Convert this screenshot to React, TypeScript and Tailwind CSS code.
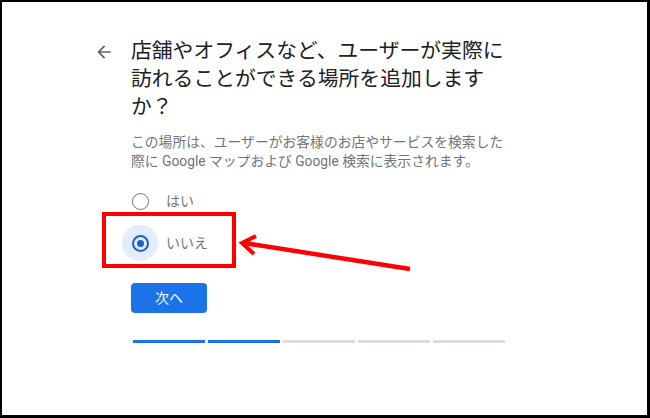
import React from "react";

const steps = [true, true, false, false, false];

const App = () => {
  return (
    <div className="relative w-[650px] h-[418px] bg-white border-t-2 border-l-2 border-r-[3px] border-b-[3px] border-black overflow-hidden font-['Roboto','Noto_Sans_CJK_JP',sans-serif]">
      <div className="flex items-start pl-[92px] pt-[35px]">
        {/* back button */}
        <svg viewBox="0 0 24 24" className="w-5 h-5 mt-[5px] mr-[17px] shrink-0 fill-[#5f6368]">
          <path d="M20 11H7.83l5.59-5.59L12 4l-8 8 8 8 1.41-1.41L7.83 13H20v-2z" />
        </svg>

        <div className="w-[376px] flex flex-col">
          <h1 className="text-[20.8px] leading-[28px] text-[#202124] font-normal">
            店舗やオフィスなど、ユーザーが実際に訪れることができる場所を追加しますか？
          </h1>
          <p className="mt-[12px] text-[13.8px] leading-[19px] text-[#70757a]">
            この場所は、ユーザーがお客様のお店やサービスを検索した際に Google マップおよび Google 検索に表示されます。
          </p>

          <div className="mt-[12px] flex flex-col gap-[6px]">
            <label className="flex items-center h-9 -ml-[9px]">
              <span className="w-9 h-9 rounded-full flex items-center justify-center">
                <span className="w-[17px] h-[17px] rounded-full border-[1.5px] border-[#6f7377]" />
              </span>
              <span className="ml-[8px] text-[14px] text-[#70757a]">はい</span>
            </label>
            <label className="flex items-center h-9 -ml-[9px]">
              <span className="w-9 h-9 rounded-full bg-[#e3edfc] flex items-center justify-center">
                <span className="w-[17px] h-[17px] rounded-full border-2 border-[#1a5fd0] flex items-center justify-center">
                  <span className="w-[7px] h-[7px] rounded-full bg-[#1a5fd0]" />
                </span>
              </span>
              <span className="ml-[8px] text-[14px] text-[#70757a]">いいえ</span>
            </label>
          </div>

          <button className="mt-[22px] w-[76px] h-[30px] rounded-[4px] bg-[#1a73e8] text-white text-[14px] leading-none">
            次へ
          </button>

          <div className="mt-[27px] ml-[2px] flex gap-[3px]">
            {steps.map((done, i) => (
              <div
                key={i}
                className={done ? "w-[72px] h-[3px] bg-[#1a73e8]" : "w-[72px] h-[3px] bg-[#dadce0]"}
              />
            ))}
          </div>
        </div>
      </div>

      {/* callout around the selected option */}
      <div className="absolute left-[100px] top-[210px] w-[134px] h-[56px] border-4 border-[#ff0000]" />
      <svg className="absolute left-0 top-0 w-[645px] h-[413px] pointer-events-none" viewBox="0 0 645 413">
        <line x1="408" y1="267" x2="242" y2="241" stroke="#ff0000" strokeWidth="4.5" />
        <polyline points="254,234 240,241 252,252" fill="none" stroke="#ff0000" strokeWidth="4" />
      </svg>
    </div>
  );
};

export default App;
